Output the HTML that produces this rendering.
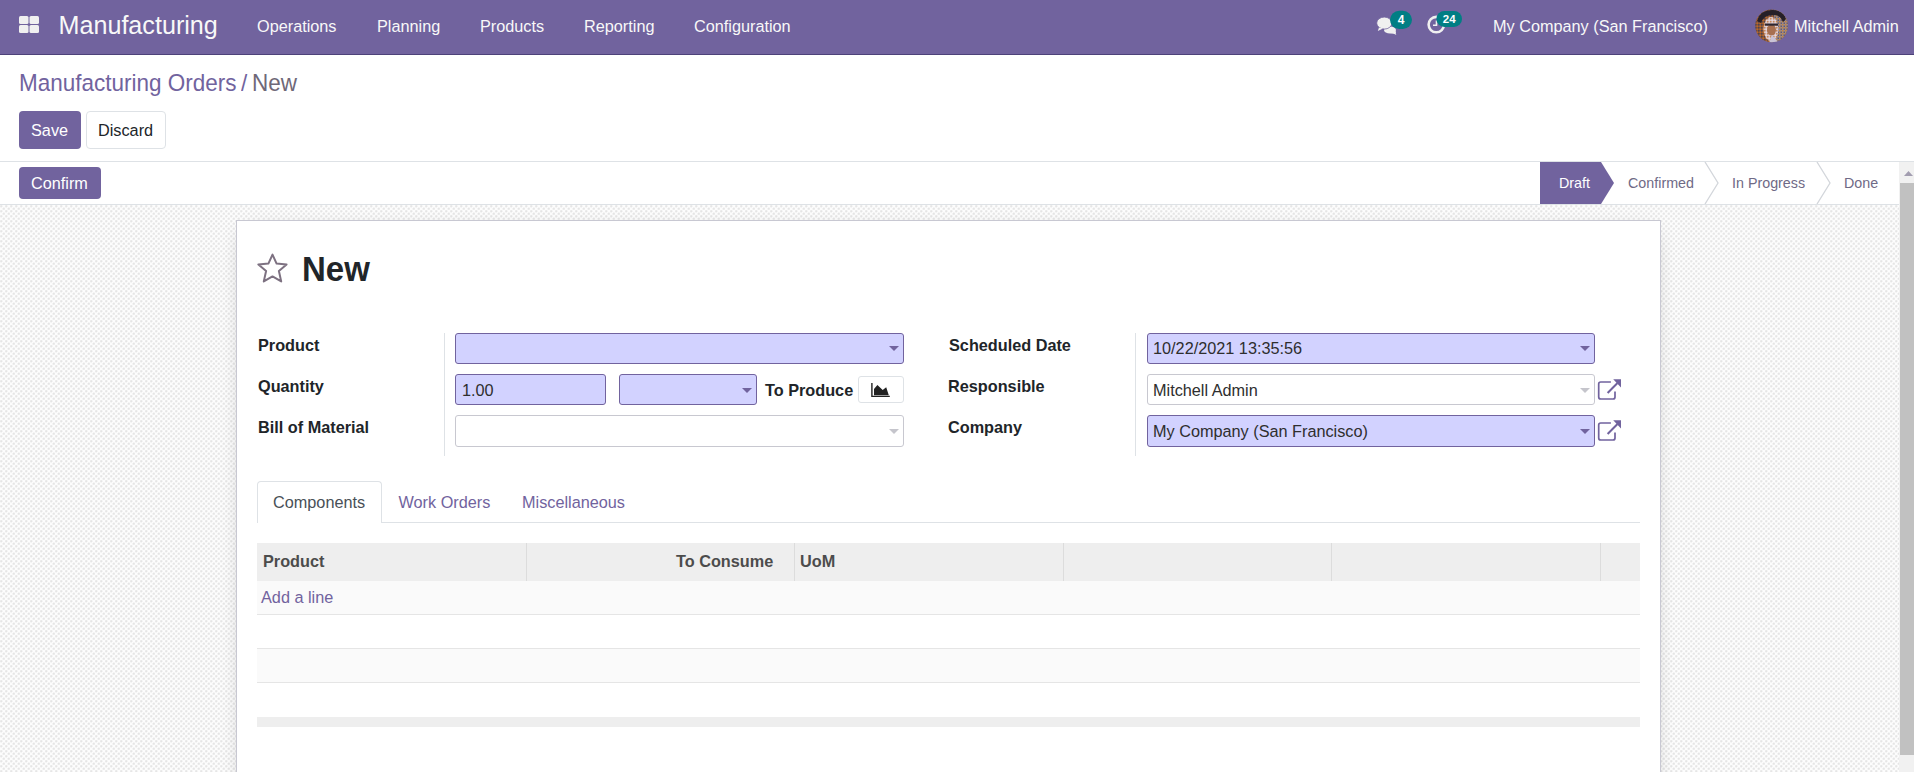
<!DOCTYPE html>
<html><head><meta charset="utf-8">
<style>
*{box-sizing:border-box;margin:0;padding:0}
html,body{width:1914px;height:772px;overflow:hidden;background:#fff;font-family:"Liberation Sans",sans-serif;font-size:16.25px;color:#212529}
.a{position:absolute;white-space:nowrap;line-height:1}
#nav{position:absolute;left:0;top:0;width:1914px;height:55px;background:#71639e;border-bottom:1px solid #4d4279}
#nav .t{color:#f8f8f8}
.btnp{position:absolute;background:#71639e;border-radius:4px}
.inp{position:absolute;border:1px solid #c8c8d0;border-radius:3px;background:#fff}
.req{background:#d2d2ff;border-color:#71639e}
.caret{position:absolute;width:0;height:0;border-left:5px solid transparent;border-right:5px solid transparent;border-top:5px solid #71639e}
.caret.g{border-top-color:#c5c5cc}
</style></head><body>

<!-- NAVBAR -->
<div id="nav">
  <svg class="a" style="left:19px;top:16px" width="21" height="18" viewBox="0 0 21 18">
    <rect x="0" y="0" width="9.5" height="8" rx="1.5" fill="#f0f0f0"/>
    <rect x="10.5" y="0" width="9.5" height="8" rx="1.5" fill="#f0f0f0"/>
    <rect x="0" y="9" width="9.5" height="8" rx="1.5" fill="#f0f0f0"/>
    <rect x="10.5" y="9" width="9.5" height="8" rx="1.5" fill="#f0f0f0"/>
  </svg>
  <div class="a t" style="left:58.5px;top:13px;font-size:25.15px">Manufacturing</div>
  <div class="a t" style="left:257px;top:18px">Operations</div>
  <div class="a t" style="left:377px;top:18px">Planning</div>
  <div class="a t" style="left:480px;top:18px">Products</div>
  <div class="a t" style="left:584px;top:18px">Reporting</div>
  <div class="a t" style="left:694px;top:18px">Configuration</div>


  <!-- chat icon -->
  <svg class="a" style="left:1372px;top:8px" width="46" height="30" viewBox="0 0 46 30">
    <path d="M12,19 C18,19 24,21.5 24,24.5 C24,25.8 23,26.8 21.8,27.6 L24.5,26 L23.8,26.5 L24.2,26.2 Z" fill="#f0f0f0"/>
    <ellipse cx="18" cy="22" rx="6" ry="3.6" fill="#f0f0f0"/>
    <path d="M21,23 L24.5,26.5 L18,25 Z" fill="#f0f0f0"/>
    <ellipse cx="12.3" cy="15.1" rx="7.6" ry="6" fill="#f0f0f0" stroke="#71639e" stroke-width="0.8"/>
    <path d="M7,19.5 L5.8,23 L11,20.5 Z" fill="#f0f0f0"/>
    <rect x="18" y="2.7" width="22" height="18.3" rx="9.2" fill="#017e84"/>
    <text x="29" y="15.8" text-anchor="middle" font-family="Liberation Sans" font-weight="bold" font-size="12" fill="#fff">4</text>
  </svg>
  <!-- activity icon -->
  <svg class="a" style="left:1422px;top:8px" width="46" height="30" viewBox="0 0 46 30">
    <circle cx="14.3" cy="16.6" r="7.7" fill="none" stroke="#f0f0f0" stroke-width="2.6"/>
    <path d="M14.5,12.5 V17.2 H11" fill="none" stroke="#f0f0f0" stroke-width="1.6"/>
    <rect x="14.4" y="2.9" width="25.6" height="16" rx="8" fill="#017e84"/>
    <text x="27.2" y="15" text-anchor="middle" font-family="Liberation Sans" font-weight="bold" font-size="11.5" fill="#fff">24</text>
  </svg>
  <!-- avatar -->
  <svg class="a" style="left:1755px;top:9px" width="34" height="34" viewBox="0 0 34 34">
    <defs>
      <clipPath id="cc"><circle cx="16.6" cy="16.8" r="16.4"/></clipPath>
      <pattern id="dl" width="3" height="3" patternUnits="userSpaceOnUse"><rect width="3" height="3" fill="#8c5634"/><rect width="1.5" height="1.5" fill="#4a4252"/><rect x="1.5" y="1.5" width="1.5" height="1.5" fill="#b8682c"/></pattern>
      <pattern id="dr" width="3" height="3" patternUnits="userSpaceOnUse"><rect width="3" height="3" fill="#958a95"/><rect width="1.5" height="1.5" fill="#c98436"/><rect x="1.5" y="1.5" width="1.5" height="1.5" fill="#6c5c66"/></pattern>
      <pattern id="df" width="3" height="3" patternUnits="userSpaceOnUse"><rect width="3" height="3" fill="#d9c4c6"/><rect width="1.5" height="1.5" fill="#c98a5a"/><rect x="1.5" y="1.5" width="1.5" height="1.5" fill="#e7d7dd"/></pattern>
    </defs>
    <g clip-path="url(#cc)">
      <rect width="34" height="34" fill="url(#dl)"/>
      <rect x="19" y="0" width="15" height="34" fill="url(#dr)"/>
      <path d="M2,12 Q5,1 17,1 Q29,1 31,10 L28,13 Q25,5 17,6 Q9,6 6,14 Z" fill="#262028"/>
      <ellipse cx="16" cy="20" rx="7.5" ry="12" fill="url(#df)"/>
      <ellipse cx="16.5" cy="21" rx="4.5" ry="5.5" fill="#a87050"/>
      <rect x="10" y="14.5" width="13" height="2.2" fill="#2e2630"/>
      <path d="M14,34 L17,26 L24,34 Z" fill="#c9c3d6"/>
    </g>
  </svg>
  <div class="a t" style="left:1493px;top:18px">My Company (San Francisco)</div>
  <div class="a t" style="left:1794px;top:18px">Mitchell Admin</div>
</div>

<!-- CONTROL PANEL -->
<div class="a" style="left:19px;top:72px;font-size:22.5px;transform:scaleY(1.06);transform-origin:0 0;color:#71639e">Manufacturing Orders</div>
<div class="a" style="left:241px;top:72px;font-size:22.5px;transform:scaleY(1.06);transform-origin:0 0;color:#71639e">/</div>
<div class="a" style="left:252px;top:72px;font-size:22.5px;transform:scaleY(1.06);transform-origin:0 0;color:#6f6878">New</div>
<div class="btnp" style="left:19px;top:111px;width:62px;height:38px"></div>
<div class="a" style="left:31px;top:122px;color:#fff">Save</div>
<div class="a" style="left:86px;top:111px;width:80px;height:38px;border:1px solid #dee2e6;border-radius:4px"></div>
<div class="a" style="left:98px;top:122px;color:#212529">Discard</div>

<!-- STATUSBAR -->
<div class="a" style="left:0;top:161px;width:1899px;height:44px;border-top:1px solid #dee2e6;border-bottom:1px solid #dee2e6;background:#fff"></div>
<div class="btnp" style="left:19px;top:167px;width:82px;height:32px"></div>
<div class="a" style="left:31px;top:175px;color:#fff">Confirm</div>


<!-- STATUS STEPS -->
<svg class="a" style="left:1540px;top:162px" width="359" height="42" viewBox="0 0 359 42">
  <polygon points="0,0 61,0 74,21 61,42 0,42" fill="#71639e"/>
  <polyline points="165,0 178,21 165,42" fill="none" stroke="#d3d6db" stroke-width="1.3"/>
  <polyline points="277,0 290,21 277,42" fill="none" stroke="#d3d6db" stroke-width="1.3"/>
</svg>
<div class="a" style="left:1559px;top:176px;font-size:14.3px;color:#fff">Draft</div>
<div class="a" style="left:1628px;top:176px;font-size:14.3px;color:#6f6a86">Confirmed</div>
<div class="a" style="left:1732px;top:176px;font-size:14.3px;color:#6f6a86">In Progress</div>
<div class="a" style="left:1844px;top:176px;font-size:14.3px;color:#6f6a86">Done</div>

<!-- CONTENT BG -->
<div class="a" style="left:0;top:205px;width:1899px;height:567px;background-color:#fdfdfd;background-image:radial-gradient(circle at 1.25px 1.25px,#e6e6e6 0.6px,rgba(230,230,230,0) 1.7px),radial-gradient(circle at 3.75px 3.75px,#e6e6e6 0.6px,rgba(230,230,230,0) 1.7px);background-size:5px 5px"></div>

<!-- SHEET -->
<div class="a" style="left:236px;top:220px;width:1425px;height:600px;background:#fff;border:1px solid #c8c8d2;box-shadow:0 5px 20px -10px rgba(0,0,0,.35)"></div>


<!-- SHEET CONTENT -->
<svg class="a" style="left:256px;top:252px" width="33" height="32" viewBox="0 0 33 32">
  <polygon points="16.5,2.6 20.6,11.6 30.6,12.5 22.9,19 25.2,29.4 16.5,24.4 7.8,29.4 10.1,19 2.4,12.5 12.4,11.6" fill="none" stroke="#7d7181" stroke-width="2" stroke-linejoin="round"/>
</svg>
<div class="a" style="left:302px;top:252px;font-size:33px;transform:scaleY(1.045);transform-origin:0 0;font-weight:bold;color:#212529">New</div>

<div class="a" style="left:258px;top:337px;font-weight:bold">Product</div>
<div class="a" style="left:258px;top:378px;font-weight:bold">Quantity</div>
<div class="a" style="left:258px;top:419px;font-weight:bold">Bill of Material</div>
<div class="a" style="left:444px;top:333px;width:1px;height:123px;background:#dee2e6"></div>

<div class="inp req" style="left:455px;top:333px;width:449px;height:31px"></div>
<div class="caret" style="left:889px;top:346px"></div>
<div class="inp req" style="left:455px;top:374px;width:151px;height:31px"></div>
<div class="a" style="left:462px;top:382px;color:#2e2e2e">1.00</div>
<div class="inp req" style="left:619px;top:374px;width:138px;height:31px"></div>
<div class="caret" style="left:742px;top:388px"></div>
<div class="a" style="left:765px;top:382px;font-weight:bold">To Produce</div>
<div class="inp" style="left:858px;top:376px;width:46px;height:27px;border-color:#dee2e6"></div>
<svg class="a" style="left:870px;top:383px" width="21" height="15" viewBox="0 0 21 15">
  <path d="M1.9,0 V13.4 H19.8" fill="none" stroke="#212121" stroke-width="1.4"/>
  <path d="M4,12.3 V5.9 L7.4,2 L12.7,7.1 L16.2,4.2 L18.8,12.3 Z" fill="#212121"/>
</svg>
<div class="inp" style="left:455px;top:415px;width:449px;height:32px"></div>
<div class="caret g" style="left:889px;top:429px"></div>

<div class="a" style="left:949px;top:337px;font-weight:bold">Scheduled Date</div>
<div class="a" style="left:948px;top:378px;font-weight:bold">Responsible</div>
<div class="a" style="left:948px;top:419px;font-weight:bold">Company</div>
<div class="a" style="left:1135px;top:333px;width:1px;height:123px;background:#dee2e6"></div>

<div class="inp req" style="left:1147px;top:333px;width:448px;height:31px"></div>
<div class="a" style="left:1153px;top:340px;color:#2e2e2e">10/22/2021 13:35:56</div>
<div class="caret" style="left:1580px;top:346px"></div>
<div class="inp" style="left:1147px;top:374px;width:448px;height:31px"></div>
<div class="a" style="left:1153px;top:382px;color:#2e2e2e">Mitchell Admin</div>
<div class="caret g" style="left:1580px;top:388px"></div>
<div class="inp req" style="left:1147px;top:415px;width:448px;height:32px"></div>
<div class="a" style="left:1153px;top:423px;color:#2e2e2e">My Company (San Francisco)</div>
<div class="caret" style="left:1580px;top:429px"></div>

<svg class="a" style="left:1592px;top:374px" width="36" height="30" viewBox="0 0 36 30">
  <path d="M18.9,8 H8.7 Q6.7,8 6.7,10 V23 Q6.7,25 8.7,25 H21 Q23,25 23,23 V17.5" fill="none" stroke="#71639e" stroke-width="1.7"/>
  <path d="M15.6,19 L25.5,9" fill="none" stroke="#71639e" stroke-width="2"/>
  <polygon points="21.2,5.3 29,5.3 29,13.6" fill="#71639e"/>
</svg>
<svg class="a" style="left:1592px;top:415px" width="36" height="30" viewBox="0 0 36 30">
  <path d="M18.9,8 H8.7 Q6.7,8 6.7,10 V23 Q6.7,25 8.7,25 H21 Q23,25 23,23 V17.5" fill="none" stroke="#71639e" stroke-width="1.7"/>
  <path d="M15.6,19 L25.5,9" fill="none" stroke="#71639e" stroke-width="2"/>
  <polygon points="21.2,5.3 29,5.3 29,13.6" fill="#71639e"/>
</svg>

<!-- TABS -->
<div class="a" style="left:257px;top:522px;width:1383px;height:1px;background:#dee2e6"></div>
<div class="a" style="left:257px;top:481px;width:125px;height:42px;border:1px solid #dee2e6;border-bottom:none;border-radius:4px 4px 0 0;background:#fff"></div>
<div class="a" style="left:273px;top:494px;color:#495057">Components</div>
<div class="a" style="left:398.5px;top:494px;color:#71639e">Work Orders</div>
<div class="a" style="left:522px;top:494px;color:#71639e">Miscellaneous</div>

<!-- TABLE -->
<div class="a" style="left:257px;top:543px;width:1383px;height:38px;background:#eeeeee"></div>
<div class="a" style="left:526px;top:543px;width:1px;height:38px;background:#dcdcdc"></div>
<div class="a" style="left:794px;top:543px;width:1px;height:38px;background:#dcdcdc"></div>
<div class="a" style="left:1063px;top:543px;width:1px;height:38px;background:#dcdcdc"></div>
<div class="a" style="left:1331px;top:543px;width:1px;height:38px;background:#dcdcdc"></div>
<div class="a" style="left:1600px;top:543px;width:1px;height:38px;background:#dcdcdc"></div>
<div class="a" style="left:263px;top:553px;font-weight:bold;color:#4c4c4c">Product</div>
<div class="a" style="left:676px;top:553px;font-weight:bold;color:#4c4c4c">To Consume</div>
<div class="a" style="left:800px;top:553px;font-weight:bold;color:#4c4c4c">UoM</div>
<div class="a" style="left:257px;top:581px;width:1383px;height:33px;background:#fafafa"></div>
<div class="a" style="left:261px;top:589px;color:#71639e">Add a line</div>
<div class="a" style="left:257px;top:614px;width:1383px;height:1px;background:#e5e5e5"></div>
<div class="a" style="left:257px;top:648px;width:1383px;height:34px;background:#fafafa"></div>
<div class="a" style="left:257px;top:648px;width:1383px;height:1px;background:#e5e5e5"></div>
<div class="a" style="left:257px;top:682px;width:1383px;height:1px;background:#e5e5e5"></div>
<div class="a" style="left:257px;top:717px;width:1383px;height:10px;background:#eeeeee"></div>

<!-- SCROLLBAR -->
<div class="a" style="left:0;top:161px;width:1914px;height:1px;background:#dee2e6"></div>
<div class="a" style="left:1899px;top:162px;width:15px;height:610px;background:#f1f1f1"></div>
<div class="a" style="left:1900px;top:183px;width:14px;height:572px;background:#c1c1c1"></div>
<svg class="a" style="left:1899px;top:162px" width="15" height="20" viewBox="0 0 15 20"><polygon points="5,14 9.5,9 14,14" fill="#a29db0"/></svg>

</body></html>
